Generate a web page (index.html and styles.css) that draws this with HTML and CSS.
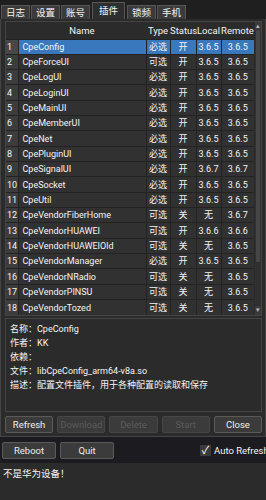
FILE: index.html
```html
<!DOCTYPE html>
<html>
  <head>
    <meta charset="UTF-8" />
    <meta name="viewport" content="width=device-width, initial-scale=1.0" />
    <title>插件</title>
    <link rel="stylesheet" href="styles.css">
  </head>
  <body>
    <div class="tabs">
      <div class="tab">日志</div>
      <div class="tab">设置</div>
      <div class="tab">账号</div>
      <div class="tab active">插件</div>
      <div class="tab">锁频</div>
      <div class="tab">手机</div>
    </div>
    <div class="panel">
      <div class="grid-wrap">
        <table class="grid">
          <colgroup>
            <col class="c-num" />
            <col class="c-name" />
            <col class="c-type" />
            <col class="c-status" />
            <col class="c-local" />
            <col class="c-remote" />
          </colgroup>
          <thead>
            <tr>
              <th></th>
              <th>Name</th>
              <th>Type</th>
              <th>Status</th>
              <th>Local</th>
              <th>Remote</th>
            </tr>
          </thead>
          <tbody>
            <tr class="sel"><td class="num">1</td><td class="name">CpeConfig</td><td>必选</td><td>开</td><td>3.6.5</td><td>3.6.5</td></tr>
            <tr><td class="num">2</td><td class="name">CpeForceUI</td><td>可选</td><td>开</td><td>3.6.5</td><td>3.6.5</td></tr>
            <tr><td class="num">3</td><td class="name">CpeLogUI</td><td>必选</td><td>开</td><td>3.6.5</td><td>3.6.5</td></tr>
            <tr><td class="num">4</td><td class="name">CpeLoginUI</td><td>必选</td><td>开</td><td>3.6.5</td><td>3.6.5</td></tr>
            <tr><td class="num">5</td><td class="name">CpeMainUI</td><td>必选</td><td>开</td><td>3.6.5</td><td>3.6.5</td></tr>
            <tr><td class="num">6</td><td class="name">CpeMemberUI</td><td>必选</td><td>开</td><td>3.6.5</td><td>3.6.5</td></tr>
            <tr><td class="num">7</td><td class="name">CpeNet</td><td>必选</td><td>开</td><td>3.6.5</td><td>3.6.5</td></tr>
            <tr><td class="num">8</td><td class="name">CpePluginUI</td><td>必选</td><td>开</td><td>3.6.5</td><td>3.6.5</td></tr>
            <tr><td class="num">9</td><td class="name">CpeSignalUI</td><td>必选</td><td>开</td><td>3.6.7</td><td>3.6.7</td></tr>
            <tr><td class="num">10</td><td class="name">CpeSocket</td><td>必选</td><td>开</td><td>3.6.5</td><td>3.6.5</td></tr>
            <tr><td class="num">11</td><td class="name">CpeUtil</td><td>必选</td><td>开</td><td>3.6.5</td><td>3.6.5</td></tr>
            <tr><td class="num">12</td><td class="name">CpeVendorFiberHome</td><td>可选</td><td>关</td><td>无</td><td>3.6.7</td></tr>
            <tr><td class="num">13</td><td class="name">CpeVendorHUAWEI</td><td>可选</td><td>开</td><td>3.6.6</td><td>3.6.6</td></tr>
            <tr><td class="num">14</td><td class="name">CpeVendorHUAWEIOld</td><td>可选</td><td>关</td><td>无</td><td>3.6.5</td></tr>
            <tr><td class="num">15</td><td class="name">CpeVendorManager</td><td>必选</td><td>开</td><td>3.6.5</td><td>3.6.5</td></tr>
            <tr><td class="num">16</td><td class="name">CpeVendorNRadio</td><td>可选</td><td>关</td><td>无</td><td>3.6.5</td></tr>
            <tr><td class="num">17</td><td class="name">CpeVendorPINSU</td><td>可选</td><td>关</td><td>无</td><td>3.6.5</td></tr>
            <tr><td class="num">18</td><td class="name">CpeVendorTozed</td><td>可选</td><td>关</td><td>无</td><td>3.6.5</td></tr>
          </tbody>
        </table>
        <div class="scroll">
          <div class="arrow">&#9652;</div>
          <div class="track"><div class="thumb"></div></div>
          <div class="arrow">&#9662;</div>
        </div>
      </div>
      <div class="info">
        <p>名称：CpeConfig</p>
        <p>作者：KK</p>
        <p>依赖：</p>
        <p>文件：libCpeConfig_arm64-v8a.so</p>
        <p>描述：配置文件插件，用于各种配置的读取和保存</p>
      </div>
      <div class="actions">
        <button class="btn">Refresh</button>
        <button class="btn" disabled>Download</button>
        <button class="btn" disabled>Delete</button>
        <button class="btn" disabled>Start</button>
        <button class="btn">Close</button>
      </div>
    </div>
    <div class="bar">
      <button class="btn wide">Reboot</button>
      <button class="btn wide">Quit</button>
      <label class="check"><span class="box">&#10003;</span>Auto Refresh</label>
    </div>
    <div class="log">不是华为设备！</div>
  </body>
</html>
```

FILE: styles.css
```css
* {
  box-sizing: border-box;
  margin: 0;
  padding: 0;
}

body {
  width: 266px;
  height: 500px;
  overflow: hidden;
  background-color: #2b2b2b;
  color: #f5f5f5;
  font-family: Roboto, "Noto Sans CJK SC", sans-serif;
  font-size: 9px;
}

.tabs {
  display: flex;
  align-items: flex-end;
  gap: 1px;
  height: 19px;
  padding-left: 1px;
  background-color: #1f1f1f;
}

.tab {
  width: 29px;
  height: 14px;
  line-height: 13px;
  text-align: center;
  background-color: #3b3b3b;
  border: 1px solid #575757;
  border-bottom: none;
  font-size: 9.5px;
}

.tab.active {
  width: 33px;
  height: 17px;
  line-height: 16px;
  margin: 0 1px;
  background-color: #2e2e2e;
}

.panel {
  padding: 2px 3px 3px 4px;
  border-left: 1px solid #444;
  border-right: 1px solid #444;
  border-bottom: 1px solid #444;
}

.grid-wrap {
  display: flex;
  height: 295px;
  border: 1px solid #444;
}

.grid {
  width: 248px;
  border-collapse: collapse;
  table-layout: fixed;
}

.c-num { width: 12px; }
.c-name { width: 128px; }
.c-type { width: 24px; }
.c-status { width: 26px; }
.c-local { width: 25px; }
.c-remote { width: 33px; }

.grid th {
  height: 17px;
  padding: 0;
  font-weight: normal;
  font-size: 9.5px;
  text-align: center;
  white-space: nowrap;
  border-bottom: 1px solid #222;
}

.grid td {
  height: 15.25px;
  padding: 0;
  line-height: 12px;
  text-align: center;
  white-space: nowrap;
  overflow: hidden;
  background-color: #313131;
  border-top: 1px solid #232323;
  border-left: 1px solid #232323;
}

.grid td.num {
  background-color: #3c3c3c;
  text-align: left;
  padding-left: 1px;
  border-left: none;
}

.grid td.name {
  text-align: left;
  padding-left: 4px;
}

.grid tr.sel td {
  background-color: #3a78be;
}

.grid tr.sel td.num {
  background-color: #474747;
}

.scroll {
  display: flex;
  flex-direction: column;
  width: 9px;
  margin-left: 1px;
}

.arrow {
  height: 9px;
  line-height: 9px;
  font-size: 7px;
  text-align: center;
  color: #bbb;
  background-color: #3a3a3a;
}

.track {
  flex: 1;
  background-color: #303030;
}

.thumb {
  height: 84%;
  margin: 0 1px;
  background-color: #464646;
}

.info {
  height: 94px;
  margin-top: 2px;
  padding: 3px 4px;
  border: 1px solid #444;
  line-height: 14px;
}

.actions {
  display: flex;
  gap: 4px;
  margin-top: 4px;
}

.btn {
  flex: 1;
  height: 17px;
  font-family: Roboto, sans-serif;
  font-size: 9.5px;
  color: #eee;
  background-color: #3b3b3b;
  border: 1px solid #5a5a5a;
  border-radius: 2px;
}

.btn:disabled {
  color: #5a5a5a;
  border-color: #464646;
}

.bar {
  display: flex;
  align-items: center;
  gap: 4px;
  height: 26px;
  padding: 0 2px;
  overflow: hidden;
  background-color: #1c1c20;
}

.btn.wide {
  flex: none;
  width: 54px;
}

.check {
  display: flex;
  align-items: center;
  gap: 3px;
  margin-left: 82px;
  white-space: nowrap;
  font-size: 9.5px;
}

.box {
  width: 11px;
  height: 11px;
  line-height: 11px;
  text-align: center;
  font-size: 11px;
  color: #fff;
  background-color: #3a3a3a;
}

.log {
  height: 40px;
  padding: 3px 3px;
  font-size: 9.5px;
}
```
